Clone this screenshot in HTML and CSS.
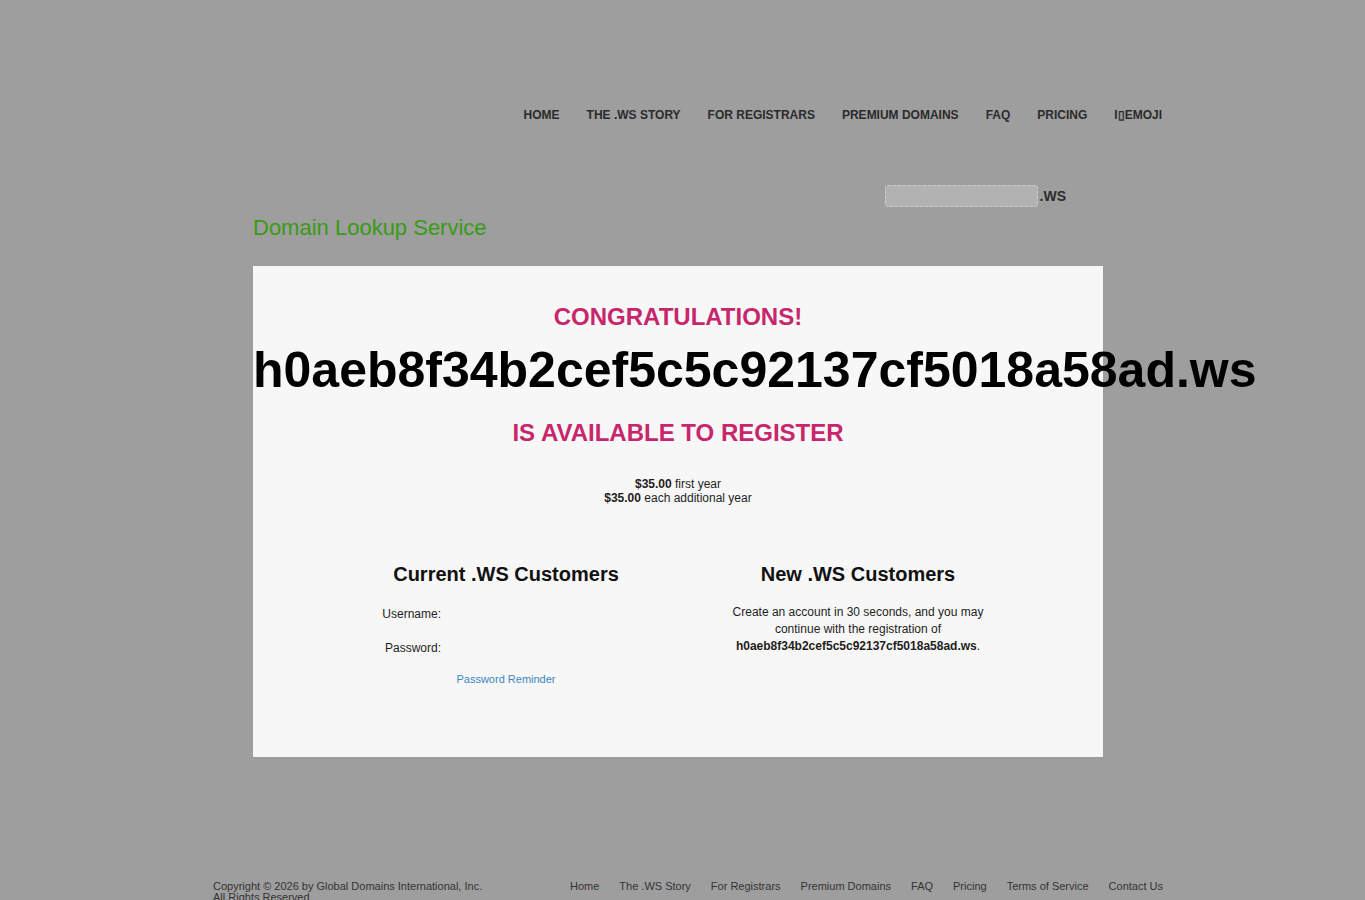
FILE: index.html
```html
<!DOCTYPE html>
<html lang="en">
<head>
    <meta charset="UTF-8">
    <meta name="viewport" content="width=device-width, initial-scale=1.0">
    <title>Domain Lookup Service</title>
    <link rel="stylesheet" href="styles.css">
</head>
<body>
    <div class="page">
        <header class="header">
            <nav class="nav">
                <a href="#">HOME</a>
                <a href="#">THE .WS STORY</a>
                <a href="#">FOR REGISTRARS</a>
                <a href="#">PREMIUM DOMAINS</a>
                <a href="#">FAQ</a>
                <a href="#">PRICING</a>
                <a href="#">I&#9647;EMOJI</a>
            </nav>
            <div class="search">
                <input type="text" class="search-input">
                <span class="tld">.WS</span>
            </div>
        </header>

        <h1 class="title">Domain Lookup Service</h1>

        <section class="result">
            <h2 class="congrats">CONGRATULATIONS!</h2>
            <div class="domain">h0aeb8f34b2cef5c5c92137cf5018a58ad.ws</div>
            <h2 class="available">IS AVAILABLE TO REGISTER</h2>
            <div class="prices">
                <b>$35.00</b> first year<br>
                <b>$35.00</b> each additional year
            </div>

            <div class="columns">
                <div class="col">
                    <h3>Current .WS Customers</h3>
                    <div class="row"><label>Username:</label></div>
                    <div class="row"><label>Password:</label></div>
                    <a href="#" class="reminder">Password Reminder</a>
                </div>
                <div class="col">
                    <h3>New .WS Customers</h3>
                    <p class="info">Create an account in 30 seconds, and you may<br>
                    continue with the registration of<br>
                    <b>h0aeb8f34b2cef5c5c92137cf5018a58ad.ws</b>.</p>
                </div>
            </div>
        </section>

        <footer class="footer">
            <div class="copy">Copyright &copy; 2026 by Global Domains International, Inc.<br>All Rights Reserved</div>
            <div class="links">
                <a href="#">Home</a>
                <a href="#">The .WS Story</a>
                <a href="#">For Registrars</a>
                <a href="#">Premium Domains</a>
                <a href="#">FAQ</a>
                <a href="#">Pricing</a>
                <a href="#">Terms of Service</a>
                <a href="#">Contact Us</a>
            </div>
        </footer>
    </div>
</body>
</html>
```

FILE: styles.css
```css
body {
    margin: 0;
    padding: 0 0 0 11px;
    background-color: #9e9e9e;
    font-family: 'Liberation Sans', Arial, sans-serif;
    color: #1e1e1e;
    height: 900px;
    overflow: hidden;
}

.page {
    width: 950px;
    margin: 0 auto;
}

.header {
    padding-top: 101px;
}

.nav {
    display: flex;
    justify-content: flex-end;
    gap: 27px;
    padding-right: 1px;
    height: 28px;
    line-height: 28px;
}

.nav a {
    font-size: 12px;
    font-weight: bold;
    color: #2b2b2b;
    text-decoration: none;
}

.search {
    display: flex;
    justify-content: flex-end;
    align-items: center;
    margin-top: 56px;
    padding-right: 97px;
    height: 22px;
}

.search-input {
    box-sizing: border-box;
    width: 153px;
    height: 22px;
    margin: 0 2px 0 0;
    background-color: #b2b2b2;
    border: 1px dashed #cdcdcd;
    border-radius: 3px;
}

.tld {
    font-size: 14px;
    font-weight: bold;
    color: #2b2b2b;
}

.title {
    margin: 8px 0 0 40px;
    font-size: 22px;
    line-height: 26px;
    font-weight: normal;
    color: #3a9a14;
}

.result {
    width: 850px;
    height: 491px;
    box-sizing: border-box;
    margin: 25px 0 0 40px;
    padding-top: 37px;
    background-color: #f7f7f7;
    text-align: center;
}

.congrats, .available {
    margin: 0;
    font-size: 24px;
    line-height: 28px;
    color: #c8266c;
}

.domain {
    margin-top: 11px;
    font-size: 50px;
    line-height: 56px;
    font-weight: bold;
    color: #000;
    white-space: nowrap;
}

.available {
    margin-top: 21px;
}

.prices {
    margin-top: 30px;
    font-size: 12px;
    line-height: 14px;
}

.columns {
    display: flex;
    justify-content: center;
    margin-top: 57px;
    padding-left: 8px;
}

.col {
    width: 352px;
}

.col h3 {
    margin: 0 0 18px;
    font-size: 20px;
    line-height: 24px;
    color: #111;
}

.row {
    display: grid;
    grid-template-columns: 111px 1fr;
    height: 34px;
    font-size: 12px;
    line-height: 20px;
}

.row label {
    text-align: right;
}

.reminder {
    display: block;
    margin-top: 0;
    font-size: 11px;
    line-height: 14px;
    color: #3d86c6;
    text-decoration: none;
}

.info {
    margin: 17px 0 0;
    font-size: 12px;
    line-height: 17px;
}

.footer {
    display: flex;
    justify-content: space-between;
    margin-top: 124px;
    font-size: 11px;
    line-height: 11px;
    color: #333;
}

.links {
    display: flex;
    gap: 20px;
}

.links a {
    color: #333;
    text-decoration: none;
}
```
